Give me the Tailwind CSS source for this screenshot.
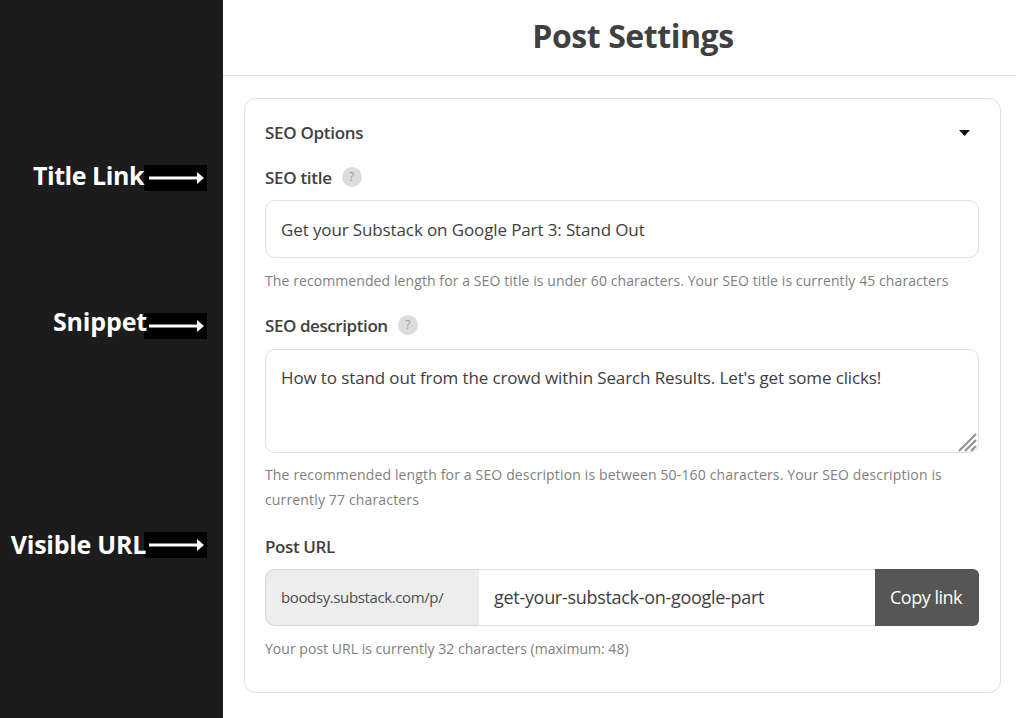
<!DOCTYPE html>
<html lang="en">
<head>
  <meta charset="UTF-8" />
  <meta name="viewport" content="width=device-width, initial-scale=1.0" />
  <title>Post Settings</title>
  <script src="https://cdn.jsdelivr.net/npm/@tailwindcss/browser@4"></script>
</head>
<body class="bg-white font-['Open_Sans',sans-serif] text-[#404040] w-[1016px] h-[718px] overflow-hidden flex">
  <!-- annotation column -->
  <aside class="w-[223px] h-[718px] shrink-0 bg-[#1c1c1c] pt-[165px] pr-[16px] flex flex-col items-end text-white font-bold text-[25px]">
    <div class="flex items-center h-[26px]">
      <span class="mr-0 mb-[6px] leading-[22px] relative tracking-[-0.45px]">Title Link</span>
      <span class="w-[63px] h-[26px] bg-black flex items-center justify-center"><svg width="58" height="12" viewBox="0 0 58 12"><path d="M2 6H52" stroke="#fff" stroke-width="3"/><path d="M50 0l7 6-7 6z" fill="#fff"/></svg></span>
    </div>
    <div class="flex items-center h-[27px] mt-[121px]">
      <span class="mr-[-3px] mb-[10px] leading-[22px] relative tracking-[-0.15px]">Snippet</span>
      <span class="w-[63px] h-[26px] bg-black flex items-center justify-center"><svg width="58" height="12" viewBox="0 0 58 12"><path d="M2 6H52" stroke="#fff" stroke-width="3"/><path d="M50 0l7 6-7 6z" fill="#fff"/></svg></span>
    </div>
    <div class="flex items-center h-[26px] mt-[193px]">
      <span class="mr-[-2px] mb-[2px] leading-[22px] relative tracking-[-0.27px]">Visible URL</span>
      <span class="w-[63px] h-[26px] bg-black flex items-center justify-center"><svg width="58" height="12" viewBox="0 0 58 12"><path d="M2 6H52" stroke="#fff" stroke-width="3"/><path d="M50 0l7 6-7 6z" fill="#fff"/></svg></span>
    </div>
  </aside>

  <main class="flex-1 min-w-0">
    <header class="h-[76px] border-b border-[#e0e0e0] flex items-center justify-center pl-[27px] pb-[3px]">
      <h1 class="text-[32px] font-bold tracking-[-0.45px] text-[#404040]">Post Settings</h1>
    </header>

    <section class="ml-[21px] mt-[22px] w-[757px] h-[595px] border border-[#e0e0e0] rounded-[12px] px-[20px] pt-[20px]">
      <div class="flex items-center justify-between h-[28px] pr-[9px]">
        <h2 class="text-[17px] font-semibold tracking-[-0.3px]">SEO Options</h2>
        <svg class="mr-[1px]" width="11" height="6" viewBox="0 0 11 6"><path d="M0 0h11L5.5 6z" fill="#111"/></svg>
      </div>

      <div class="flex items-center h-[24px] mt-[19px]">
        <label class="text-[17px] font-semibold tracking-[-0.3px]">SEO title</label>
        <span class="ml-[10px] w-[20px] h-[20px] mb-[2px] rounded-full bg-[#dcdcdc] text-[#999999] text-[12px] flex items-center justify-center">?</span>
      </div>
      <div class="mt-[10px] w-[714px] h-[58px] border border-[#e0e0e0] rounded-[10px] px-[15px] pt-[2px] flex items-center text-[17px] tracking-[-0.12px]">Get your Substack on Google Part 3: Stand Out</div>
      <p class="mt-[12px] text-[14px] leading-[22px] text-[#808080] tracking-[0.09px]">The recommended length for a SEO title is under 60 characters. Your SEO title is currently 45 characters</p>

      <div class="flex items-center h-[24px] mt-[22px]">
        <label class="text-[17px] font-semibold tracking-[-0.42px]">SEO description</label>
        <span class="ml-[10px] w-[20px] h-[20px] mb-[2px] rounded-full bg-[#dcdcdc] text-[#999999] text-[12px] flex items-center justify-center">?</span>
      </div>
      <div class="relative mt-[11px] w-[714px] h-[104px] border border-[#e0e0e0] rounded-[10px] px-[15px] pt-[15px] text-[17px] leading-[26px] tracking-[-0.12px]">
        How to stand out from the crowd within Search Results. Let's get some clicks!
        <svg class="absolute right-0 bottom-0" width="20" height="20" viewBox="0 0 20 20"><path d="M1 19L18 2M7 19L18 8M13 19L18 14" stroke="#909090" stroke-width="2"/></svg>
      </div>
      <p class="mt-[9px] w-[700px] text-[14px] leading-[25px] text-[#808080] tracking-[0.15px]">The recommended length for a SEO description is between 50-160 characters. Your SEO description is currently 77 characters</p>

      <label class="block mt-[23px] h-[24px] leading-[24px] text-[17px] font-semibold tracking-[-0.4px]">Post URL</label>
      <div class="mt-[10px] w-[714px] h-[57px] flex">
        <div class="w-[214px] bg-[#ededed] border border-[#d4d4d4] border-r-0 rounded-l-[10px] pl-[15px] flex items-center text-[15px] tracking-[-0.38px] text-[#4d4d4d]">boodsy.substack.com/p/</div>
        <div class="flex-1 border-y border-[#e0e0e0] pl-[15px] flex items-center text-[18px] tracking-[-0.3px]">get-your-substack-on-google-part</div>
        <button class="w-[104px] bg-[#565656] text-white rounded-r-[6px] pr-[2px] text-[18px] tracking-[-0.5px]">Copy link</button>
      </div>
      <p class="mt-[12px] text-[14px] leading-[22px] text-[#808080] tracking-[0.03px]">Your post URL is currently 32 characters (maximum: 48)</p>
    </section>
  </main>
</body>
</html>
